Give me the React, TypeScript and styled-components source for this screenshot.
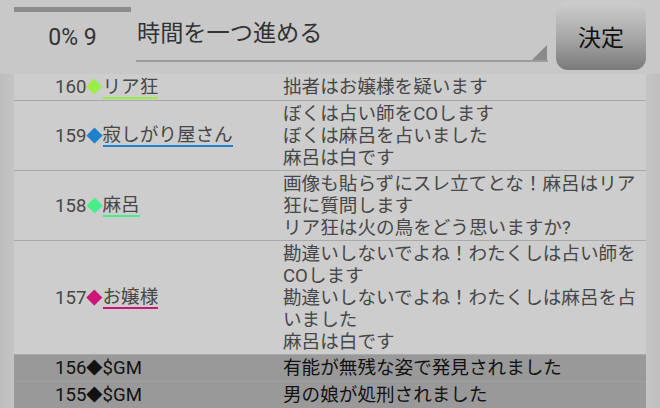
import React from 'react';
import styled, { createGlobalStyle } from 'styled-components';

const GlobalStyle = createGlobalStyle`
  body {
    margin: 0;
    background: #c3c3c3;
    font-family: Roboto, 'Noto Sans CJK JP', sans-serif;
  }
`;

type Log = {
  no: number;
  name: string;
  color?: string;
  lines: string[];
  system?: boolean;
};

const logs: Log[] = [
  { no: 160, name: 'リア狂', color: '#9aee48', lines: ['拙者はお嬢様を疑います'] },
  {
    no: 159,
    name: '寂しがり屋さん',
    color: '#1f80cc',
    lines: ['ぼくは占い師をCOします', 'ぼくは麻呂を占いました', '麻呂は白です'],
  },
  {
    no: 158,
    name: '麻呂',
    color: '#48ee88',
    lines: ['画像も貼らずにスレ立てとな！麻呂はリア狂に質問します', 'リア狂は火の鳥をどう思いますか?'],
  },
  {
    no: 157,
    name: 'お嬢様',
    color: '#cc1479',
    lines: [
      '勘違いしないでよね！わたくしは占い師をCOします',
      '勘違いしないでよね！わたくしは麻呂を占いました',
      '麻呂は白です',
    ],
  },
  { no: 156, name: '$GM', system: true, lines: ['有能が無残な姿で発見されました'] },
  { no: 155, name: '$GM', system: true, lines: ['男の娘が処刑されました'] },
];

export default function App() {
  return (
    <Page>
      <GlobalStyle />
      <Header>
        <Status>
          <Progress />
          <StatusLabel>0% 9</StatusLabel>
        </Status>
        <ActionSelect>
          時間を一つ進める
          <Corner />
        </ActionSelect>
        <DecideButton>決定</DecideButton>
      </Header>
      <LogList>
        {logs.map((log) => (
          <Row key={log.no} $system={log.system}>
            <Speaker>
              {log.no}
              <Mark $color={log.color}>◆</Mark>
              <Name $color={log.color}>{log.name}</Name>
            </Speaker>
            <Message>
              {log.lines.map((line, i) => (
                <div key={i}>{line}</div>
              ))}
            </Message>
          </Row>
        ))}
      </LogList>
    </Page>
  );
}

const Page = styled.div`
  width: 660px;
  height: 408px;
  overflow: hidden;
  display: flex;
  flex-direction: column;
  background: linear-gradient(to right, #bdbdbd 0, #c4c4c4 14px, #c8c8c8 50%, #c4c4c4 calc(100% - 14px), #bfbfbf 100%);
`;

const Header = styled.div`
  height: 74px;
  flex-shrink: 0;
  display: flex;
  padding: 0 14px;
  box-sizing: border-box;
  background: #c8c8c8;
`;

const Status = styled.div`
  width: 117px;
  display: flex;
  flex-direction: column;
`;

const Progress = styled.div`
  margin-top: 7px;
  height: 5px;
  background: #8c8c8c;
`;

const StatusLabel = styled.div`
  margin-top: 13px;
  text-align: center;
  font-size: 23px;
  line-height: 26px;
  color: #333;
`;

const ActionSelect = styled.div`
  position: relative;
  margin-left: 5px;
  width: 412px;
  height: 62px;
  box-sizing: border-box;
  border-bottom: 2px solid #9c9c9c;
  padding: 18px 0 0 1px;
  font-size: 23.2px;
  line-height: 30px;
  color: #333;
`;

const Corner = styled.div`
  position: absolute;
  right: 1px;
  bottom: 0;
  width: 0;
  height: 0;
  border-left: 15px solid transparent;
  border-bottom: 15px solid #8a8a8a;
`;

const DecideButton = styled.div`
  margin: 2px 0 0 8px;
  width: 90px;
  height: 68px;
  border-radius: 12px;
  display: flex;
  align-items: center;
  justify-content: center;
  font-size: 23px;
  color: #111;
  background: linear-gradient(to bottom, #cdcdcd 0%, #a9a9a9 50%, #7a7a7a 100%);
`;

const LogList = styled.div`
  margin: 0 14px;
  flex: 1;
  background: #cdcdcd;
`;

const Row = styled.div<{ $system?: boolean }>`
  display: grid;
  grid-template-columns: 269px 1fr;
  padding: 1.5px 0;
  border-bottom: 1px solid ${(p) => (p.$system ? '#a2a2a2' : '#a9a9a9')};
  background: ${(p) => (p.$system ? '#999999' : '#cdcdcd')};
  color: ${(p) => (p.$system ? '#111' : '#474747')};
  font-size: 18.6px;
  line-height: 22px;
`;

const Speaker = styled.div`
  display: flex;
  align-items: center;
  padding-left: 41px;
  white-space: nowrap;
`;

const Mark = styled.span<{ $color?: string }>`
  font-family: 'DejaVu Sans', sans-serif;
  font-size: 21px;
  line-height: 20px;
  margin: -4px 0 0 0;
  color: ${(p) => p.$color || '#111'};
`;

const Name = styled.span<{ $color?: string }>`
  display: inline-block;
  line-height: 19px;
  padding-top: 2px;
  border-bottom: 2px solid ${(p) => p.$color || 'transparent'};
`;

const Message = styled.div`
  padding-right: 6px;
`;
